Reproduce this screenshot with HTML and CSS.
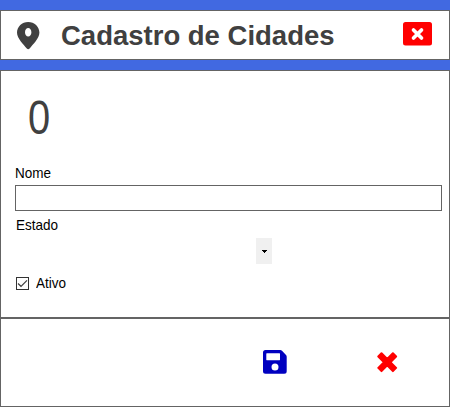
FILE: index.html
```html
<!DOCTYPE html>
<html lang="pt-BR">
<head>
<meta charset="utf-8">
<title>Cadastro de Cidades</title>
<link rel="stylesheet" href="styles.css">
</head>
<body>
<main class="window">
  <header class="header">
    <svg class="pin" width="23" height="28" viewBox="0 0 23 28"><path fill="#404040" fill-rule="evenodd" d="M11.200 0C5 0 0 4.700 0 10.600C0 16.500 6.500 22.500 9.800 26.600Q11.200 28 12.600 26.600C15.900 22.500 22.400 16.500 22.400 10.600C22.400 4.700 17.400 0 11.200 0ZM11.200 6C13 6 14.400 7.900 14.400 10.300S13 14.600 11.200 14.600S8 12.700 8 10.300S9.400 6 11.200 6Z"/></svg>
    <h1 class="title">Cadastro de Cidades</h1>
    <button class="close" type="button" aria-label="Fechar">
      <svg width="29" height="24" viewBox="0 0 29 24"><rect width="29" height="23.500" rx="2.500" fill="#f00"/><path stroke="#fff" stroke-width="3.700" stroke-linecap="round" d="M10.500 8L18.500 16M18.500 8L10.500 16"/></svg>
    </button>
  </header>
  <section class="form">
    <div class="code"><span class="digit">0</span></div>
    <label class="label" for="nome"><span class="narrow">Nome</span></label>
    <input class="field" id="nome" type="text">
    <div class="label label-state"><span class="narrow">Estado</span></div>
    <div class="select">
      <span class="arrow"><svg width="5" height="3" viewBox="0 0 5 3" shape-rendering="crispEdges"><path d="M0 0h5v1H0zM1 1h3v1H1zM2 2h1v1H2z"/></svg></span>
    </div>
    <div class="active">
      <svg width="13" height="13" viewBox="0 0 13 13"><rect x=".5" y=".5" width="12" height="12" fill="#fff" stroke="#333"/><path d="M2 6.500L5 9.300L11 3.300" fill="none" stroke="#404040" stroke-width="1.200"/></svg>
      <span class="narrow">Ativo</span>
    </div>
  </section>
  <footer class="actions">
    <svg class="save" width="24" height="24" viewBox="0 0 24 24"><path fill="#0000c0" fill-rule="evenodd" d="M2.500 0H17.200Q18.200 0 19 .8L23 5Q23.700 5.800 23.700 6.800V21.200Q23.700 23.700 21.200 23.700H2.500Q0 23.700 0 21.200V2.500Q0 0 2.500 0ZM3.700 3.300Q3.300 3.300 3.300 3.700V9.800Q3.300 10.200 3.700 10.200H16.600Q17 10.200 17 9.800V3.700Q17 3.300 16.600 3.300ZM12 13.500A3.500 3.500 0 1 0 12 20.500A3.500 3.500 0 1 0 12 13.500Z"/></svg>
    <svg class="cancel" width="21" height="21" viewBox="0 0 21 21"><path fill="none" stroke="#f00" stroke-width="4.600" d="M3.700 3.700L16.700 16.700M16.700 3.700L3.700 16.700"/><path fill="#f00" stroke="#f00" stroke-width="2" stroke-linejoin="round" d="M4.500 1.300L10.200 7L15.900 1.300L19.100 4.500L13.400 10.200L19.100 15.900L15.900 19.100L10.200 13.400L4.500 19.100L1.300 15.900L7 10.200L1.300 4.500Z"/></svg>
  </footer>
</main>
</body>
</html>
```
FILE: styles.css
```css
* { box-sizing: border-box; }

body {
  margin: 0;
  font-family: "Liberation Sans", Arial, sans-serif;
  font-size: 15px;
  color: #000;
}

.window {
  display: flex;
  flex-direction: column;
  gap: 10px;
  width: 450px;
  height: 407px;
  padding-top: 10px;
  background: #4169e1;
}

.header,
.form,
.actions {
  border: 1px solid #646464;
  background: #fff;
}

.header {
  display: flex;
  align-items: flex-start;
  height: 50px;
  padding: 11px 17px 0 16px;
}

.title {
  margin: -2px auto 0 21px;
  font-size: 28px;
  line-height: 32px;
  font-weight: bold;
  color: #404040;
  white-space: nowrap;
  transform: scaleX(.982);
  transform-origin: left;
}

.close {
  display: flex;
  padding: 0;
  border: 0;
  background: none;
}

.form {
  height: 248px;
  padding: 19px 7px 0 14px;
}

.narrow,
.digit {
  display: inline-block;
  transform: scaleX(.9);
  transform-origin: left;
}

.digit {
  transform: scaleX(.83);
}

.code {
  height: 74px;
  padding-left: 13px;
  font-size: 48px;
  line-height: 55px;
  color: #404040;
}

.label {
  display: block;
  height: 21px;
  line-height: 18px;
}

.field {
  display: block;
  width: 427px;
  height: 26px;
  padding: 0 4px;
  border: 1px solid #646464;
  background: #fff;
}

.label-state {
  height: 27px;
  padding: 5px 0 0 1px;
}

.select {
  display: flex;
  width: 257px;
  height: 26px;
  justify-content: flex-end;
}

.arrow {
  display: flex;
  align-items: center;
  justify-content: center;
  width: 16px;
  background: #f0f0f0;
}

.active {
  display: flex;
  align-items: center;
  gap: 7px;
  padding: 10px 0 0 1px;
  line-height: 18px;
}

.actions {
  display: flex;
  align-items: flex-start;
  height: 89px;
  margin-top: -10px;
  padding: 31px 0 0 262px;
}

.cancel {
  margin: 2px 0 0 90px;
}
```
